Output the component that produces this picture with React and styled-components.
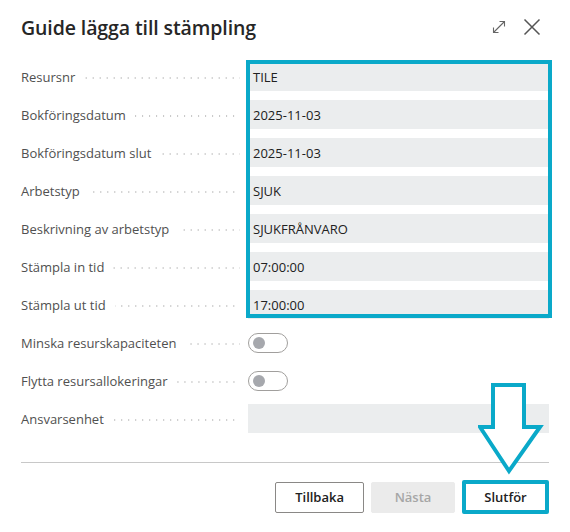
import React from 'react'
import styled, { createGlobalStyle } from 'styled-components'

const TEAL = '#0aa9c9'

const fields = [
  { label: 'Resursnr', value: 'TILE' },
  { label: 'Bokföringsdatum', value: '2025-11-03' },
  { label: 'Bokföringsdatum slut', value: '2025-11-03' },
  { label: 'Arbetstyp', value: 'SJUK' },
  { label: 'Beskrivning av arbetstyp', value: 'SJUKFRÅNVARO' },
  { label: 'Stämpla in tid', value: '07:00:00' },
  { label: 'Stämpla ut tid', value: '17:00:00' },
]

export default function App() {
  return (
    <>
      <GlobalStyle />
      <Dialog>
        <Header>
          <Title>Guide lägga till stämpling</Title>
          <HeaderIcons>
            <IconButton aria-label="Expandera">
              <svg width="14" height="14" viewBox="0 0 14 14" fill="none" stroke="#666" strokeWidth="1.1">
                <path d="M1.5 12.5 L12.5 1.5 M7.5 1.5 H12.5 V6.5 M1.5 7.5 V12.5 H6.5" />
              </svg>
            </IconButton>
            <IconButton aria-label="Stäng">
              <svg width="18" height="18" viewBox="0 0 18 18" fill="none" stroke="#555" strokeWidth="1.5">
                <path d="M1.5 1.5 L16.5 16.5 M16.5 1.5 L1.5 16.5" />
              </svg>
            </IconButton>
          </HeaderIcons>
        </Header>

        <Form>
          {fields.map((f) => (
            <React.Fragment key={f.label}>
              <Label>
                <span>{f.label}</span>
                <Dots />
              </Label>
              <Field>{f.value}</Field>
            </React.Fragment>
          ))}
          <Label>
            <span>Minska resurskapaciteten</span>
            <Dots />
          </Label>
          <ToggleCell>
            <Toggle />
          </ToggleCell>
          <Label>
            <span>Flytta resursallokeringar</span>
            <Dots />
          </Label>
          <ToggleCell>
            <Toggle />
          </ToggleCell>
          <Label>
            <span>Ansvarsenhet</span>
            <Dots />
          </Label>
          <Field />
          <Highlight />
        </Form>

        <Divider />

        <Footer>
          <Button>Tillbaka</Button>
          <Button disabled>Nästa</Button>
          <Button $marked>Slutför</Button>
        </Footer>

        <Arrow width="66" height="92" viewBox="0 0 66 92">
          <polygon
            points="15,2 46,2 46,44 62,44 31,88 2,44 15,44"
            fill="#fff"
            stroke={TEAL}
            strokeWidth="4"
            strokeLinejoin="miter"
          />
        </Arrow>
      </Dialog>
    </>
  )
}

const GlobalStyle = createGlobalStyle`
  body {
    margin: 0;
    background: #fff;
    font-family: "Open Sans", "Noto Sans", sans-serif;
  }
`

const Dialog = styled.div`
  position: relative;
  width: 570px;
  height: 532px;
  padding: 0 21px;
  box-sizing: border-box;
  background: #fff;
`

const Header = styled.div`
  display: flex;
  align-items: center;
  justify-content: space-between;
  height: 54px;
`

const Title = styled.h1`
  margin: 0;
  font-size: 19.5px;
  font-weight: 600;
  color: #262626;
  letter-spacing: -0.1px;
`

const HeaderIcons = styled.div`
  display: flex;
  align-items: center;
  gap: 17px;
  margin-right: 8px;
  margin-top: -1px;
`

const IconButton = styled.button`
  display: flex;
  align-items: center;
  justify-content: center;
  padding: 0;
  border: none;
  background: none;
`

const Form = styled.div`
  position: relative;
  display: grid;
  grid-template-columns: 227px 1fr;
  grid-auto-rows: 29px;
  row-gap: 9px;
  margin-top: 8px;
`

const Label = styled.div`
  display: flex;
  align-items: center;
  font-size: 13px;
  color: #505050;
  white-space: nowrap;
`

const Dots = styled.span`
  flex: 1;
  height: 2px;
  margin: 3px 8px 0 9px;
  background-image: linear-gradient(to right, #c4c4c4 0, #c4c4c4 1.5px, transparent 1.5px);
  background-size: 7px 2px;
  background-repeat: repeat-x;
  background-position: right center;
`

const Field = styled.div`
  display: flex;
  align-items: center;
  padding-left: 5px;
  background: #ebedee;
  font-size: 13px;
  color: #212121;
`

const ToggleCell = styled.div`
  display: flex;
  align-items: center;
`

const Toggle = styled.span`
  position: relative;
  width: 40px;
  height: 20px;
  box-sizing: border-box;
  border: 1px solid #a19f9d;
  border-radius: 10px;
  background: #fff;

  &::after {
    content: '';
    position: absolute;
    left: 4px;
    top: 3px;
    width: 12px;
    height: 12px;
    border-radius: 50%;
    background: #a6a8ad;
  }
`

const Highlight = styled.div`
  position: absolute;
  left: 225px;
  top: -2px;
  width: 306px;
  height: 258px;
  box-sizing: border-box;
  border: 4px solid ${TEAL};
  pointer-events: none;
`

const Divider = styled.div`
  height: 1px;
  margin-top: 29px;
  background: #c8c8c8;
`

const Footer = styled.div`
  display: flex;
  justify-content: flex-end;
  align-items: center;
  gap: 7px;
  margin-top: 17px;
`

const Button = styled.button`
  height: ${(p) => (p.$marked ? '34px' : '31px')};
  min-width: ${(p) => (p.$marked ? '87px' : '84px')};
  padding: 0 ${(p) => (p.$marked ? '17px' : '19px')};
  box-sizing: border-box;
  border: ${(p) => (p.$marked ? `4px solid ${TEAL}` : '1px solid #8a8886')};
  border-radius: 2px;
  background: #fff;
  font-family: "Open Sans", "Noto Sans", sans-serif;
  font-size: 13px;
  font-weight: 600;
  color: #212121;

  &:disabled {
    border-color: #ebebeb;
    background: #ebebeb;
    color: #a6a6a6;
  }
`

const Arrow = styled.svg`
  position: absolute;
  left: 478px;
  top: 383px;
`
